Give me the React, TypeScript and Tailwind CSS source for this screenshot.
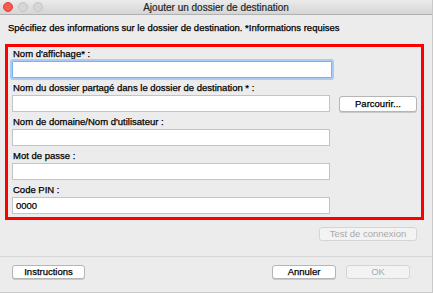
import React from "react";

const font = { fontFamily: '"Liberation Sans", Arial, sans-serif' };

function Field({ label, value = "", focused = false, children }: { label: string; value?: string; focused?: boolean; children?: React.ReactNode }) {
  return (
    <div className="flex flex-col">
      <div className="h-[12px] leading-[12px] text-[9.5px] text-black pl-[5px] [-webkit-text-stroke:0.25px_#000]">{label}</div>
      <div className="mt-[1px] flex items-center">
        <div
          className={
            focused
              ? "ml-[4px] w-[320px] h-[17px] bg-white border border-[#7fb0ee] shadow-[0_0_0_2px_#a9cbf5] rounded-[1px] text-[9.5px] leading-[15px] px-[3px]"
              : "ml-[4px] w-[318px] h-[17px] bg-white border border-[#c4c4c4] text-[9.5px] leading-[15px] px-[3px] text-black [-webkit-text-stroke:0.25px_#000]"
          }
        >
          {value}
        </div>
        {children}
      </div>
    </div>
  );
}

function Btn({ children, w, disabled = false, className = "" }: { children: React.ReactNode; w: string; disabled?: boolean; className?: string }) {
  return (
    <div
      className={
        (disabled
          ? "bg-[#f3f3f3] border-[#d5d5d5] text-[#a9a9a9] "
          : "bg-white border-[#b5b5b5] text-black shadow-[0_1px_0_#c8c8c8] [-webkit-text-stroke:0.25px_#000] ") +
        "h-[14px] border rounded-[3px] text-[9.5px] leading-[12px] flex items-center justify-center " +
        w +
        " " +
        className
      }
    >
      {children}
    </div>
  );
}

export default function App() {
  return (
    <div className="w-[433px] h-[294px] bg-white" style={font}>
      <div className="w-[433px] h-[293px] bg-[#ececec] border-r border-b border-[#c9c9c9] flex flex-col">
        <div className="h-[15px] bg-gradient-to-b from-[#ebebeb] to-[#d5d5d5] border-b border-[#b1b1b1] relative flex items-center justify-center">
          <div className="absolute left-[3px] top-[2px] flex gap-[5px]">
            <div className="w-[10px] h-[10px] rounded-full bg-[#fc5753] border border-[#df3d3a]" />
            <div className="w-[10px] h-[10px] rounded-full bg-[#d6d6d6] border border-[#c4c4c4]" />
            <div className="w-[10px] h-[10px] rounded-full bg-[#d6d6d6] border border-[#c4c4c4]" />
          </div>
          <div className="text-[10px] text-[#262626] leading-[12px] pt-[1px] [-webkit-text-stroke:0.2px_#262626]">Ajouter un dossier de destination</div>
        </div>
        <div className="pl-[8px] pt-[7px] h-[29px] text-[9.5px] leading-[12px] text-black [-webkit-text-stroke:0.25px_#000]">
          Spécifiez des informations sur le dossier de destination. *Informations requises
        </div>
        <div className="ml-[5px] w-[419px] h-[176px] border-[3px] border-[#ff0000] pt-[1px] flex flex-col gap-[4px]">
          <Field label="Nom d'affichage* :" focused />
          <Field label="Nom du dossier partagé dans le dossier de destination * :">
            <Btn w="w-[78px]" className="ml-[9px] h-[16px]">Parcourir...</Btn>
          </Field>
          <Field label="Nom de domaine/Nom d'utilisateur :" />
          <Field label="Mot de passe :" />
          <Field label="Code PIN :" value="0000" />
        </div>
        <div className="flex justify-end pr-[15px] mt-[7px]">
          <Btn w="w-[98px]" disabled>Test de connexion</Btn>
        </div>
        <div className="mt-[15px] border-t border-[#d6d6d6]" />
        <div className="flex items-center pt-[8px] px-[12px]">
          <Btn w="w-[73px]">Instructions</Btn>
          <div className="flex-1" />
          <Btn w="w-[64px]">Annuler</Btn>
          <Btn w="w-[64px]" disabled className="ml-[10px] mr-[10px]">OK</Btn>
        </div>
      </div>
    </div>
  );
}
